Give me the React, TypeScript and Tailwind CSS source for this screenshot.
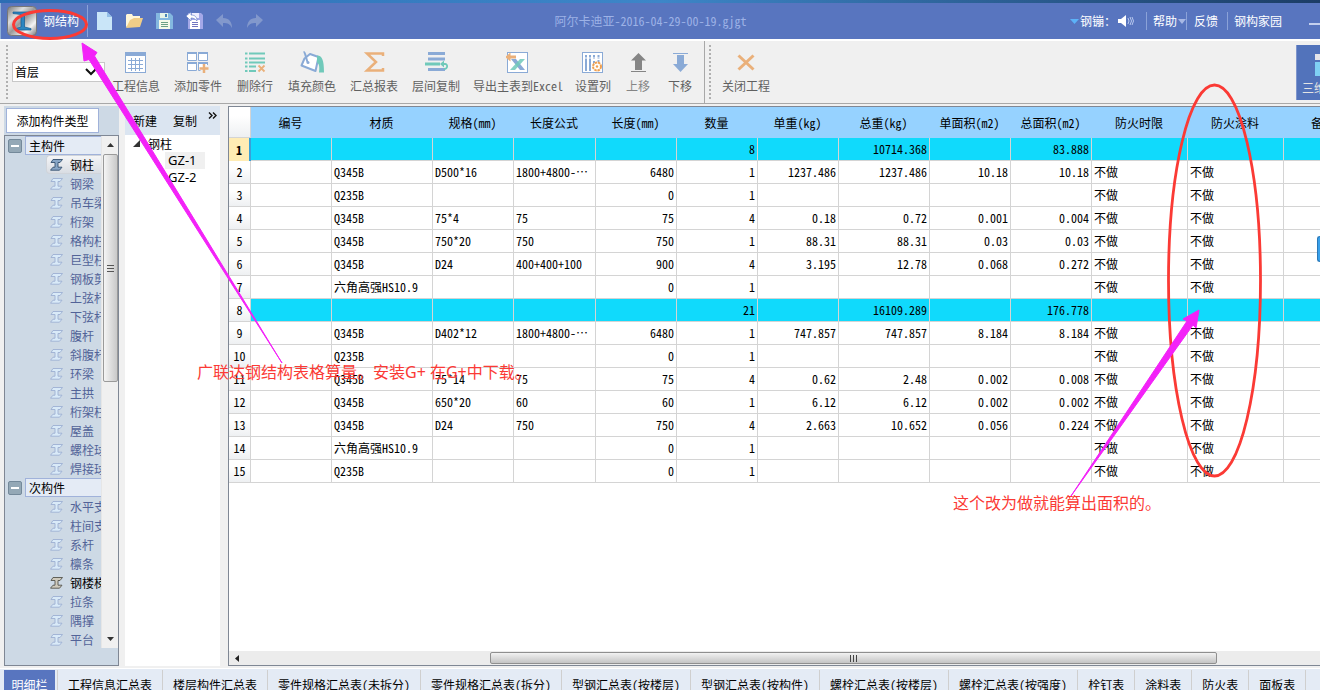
import type { ReactNode } from "react";

const columns = [
  { title: "编号", width: 81 },
  { title: "材质", width: 101 },
  { title: "规格(mm)", width: 81 },
  { title: "长度公式", width: 82 },
  { title: "长度(mm)", width: 81, right: true },
  { title: "数量", width: 81, right: true },
  { title: "单重(kg)", width: 81, right: true },
  { title: "总重(kg)", width: 91, right: true },
  { title: "单面积(m2)", width: 81, right: true },
  { title: "总面积(m2)", width: 81, right: true },
  { title: "防火时限", width: 96 },
  { title: "防火涂料", width: 96 },
  { title: "备注", width: 80 },
];

const no = "不做";
const rows: string[][] = [
  ["", "", "", "", "", "8", "", "10714.368", "", "83.888", "", "", ""],
  ["", "Q345B", "D500*16", "1800+4800-…", "6480", "1", "1237.486", "1237.486", "10.18", "10.18", no, no, ""],
  ["", "Q235B", "", "", "0", "1", "", "", "", "", no, no, ""],
  ["", "Q345B", "75*4", "75", "75", "4", "0.18", "0.72", "0.001", "0.004", no, no, ""],
  ["", "Q345B", "750*20", "750", "750", "1", "88.31", "88.31", "0.03", "0.03", no, no, ""],
  ["", "Q345B", "D24", "400+400+100", "900", "4", "3.195", "12.78", "0.068", "0.272", no, no, ""],
  ["", "六角高强HS10.9", "", "", "0", "1", "", "", "", "", no, no, ""],
  ["", "", "", "", "", "21", "", "16109.289", "", "176.778", "", "", ""],
  ["", "Q345B", "D402*12", "1800+4800-…", "6480", "1", "747.857", "747.857", "8.184", "8.184", no, no, ""],
  ["", "Q235B", "", "", "0", "1", "", "", "", "", no, no, ""],
  ["", "Q345B", "75*14", "75", "75", "4", "0.62", "2.48", "0.002", "0.008", no, no, ""],
  ["", "Q345B", "650*20", "60", "60", "1", "6.12", "6.12", "0.002", "0.002", no, no, ""],
  ["", "Q345B", "D24", "750", "750", "4", "2.663", "10.652", "0.056", "0.224", no, no, ""],
  ["", "六角高强HS10.9", "", "", "0", "1", "", "", "", "", no, no, ""],
  ["", "Q235B", "", "", "0", "1", "", "", "", "", no, no, ""],
];

const mainParts = ["钢柱", "钢梁", "吊车梁", "桁架", "格构柱", "巨型柱", "钢板剪力墙", "上弦杆", "下弦杆", "腹杆", "斜腹杆", "环梁", "主拱", "桁架柱", "屋盖", "螺栓球", "焊接球"];
const subParts = ["水平支撑", "柱间支撑", "系杆", "檩条", "钢楼梯", "拉条", "隅撑", "平台"];

const tabs = ["工程信息汇总表", "楼层构件汇总表", "零件规格汇总表(未拆分)", "零件规格汇总表(拆分)", "型钢汇总表(按楼层)", "型钢汇总表(按构件)", "螺栓汇总表(按楼层)", "螺栓汇总表(按强度)", "栓钉表", "涂料表", "防火表", "面板表"];

function Icon({ children }: { children: ReactNode }) {
  return (
    <svg viewBox="0 0 24 24" className="h-6 w-6" fill="none" aria-hidden="true">
      {children}
    </svg>
  );
}

const toolbarItems: { label: string; icon: ReactNode; size: string; dim?: boolean }[] = [
  {
    label: "工程信息",
    size: "px-[7px]",
    icon: (
      <Icon>
        <rect x="1.500" y="1.500" width="20" height="20" fill="#fff" stroke="#8aaad6" />
        <rect x="1" y="1" width="21" height="4" fill="#8aaad6" />
        <path d="M7.500 7v13M11.500 7v13M15.500 7v13M4 9.500h15M4 13.500h15M4 17.500h15" stroke="#8aaad6" />
      </Icon>
    ),
  },
  {
    label: "添加零件",
    size: "px-[7px]",
    icon: (
      <Icon>
        <path d="M1.500 1.500h9v8h-9zM12.500 1.500h9v8h-9zM1.500 11.500h9v8h-9zM21.500 14v-2.500h-9v8h2" fill="#fff" stroke="#8aaad6" />
        <path d="M1 2h10M12 2h10M1 12h10M12 12h10" stroke="#8aaad6" strokeWidth="2" />
        <path d="M18 13v9M13.500 17.500h9" stroke="#eab07a" strokeWidth="2.500" />
      </Icon>
    ),
  },
  {
    label: "删除行",
    size: "w-[52px]",
    icon: (
      <Icon>
        <path d="M2 2.500h2.500M6 2.500h16M2 7.500h2.500M6 7.500h16M2 11.500h2.500M6 11.500h16M2 15.500h2.500M6 15.500h7M2 20h2.500M6 20h7" stroke="#70c9ba" strokeWidth="2.200" />
        <path d="m15.500 14.500 6 6M21.500 14.500l-6 6" stroke="#eab07a" strokeWidth="1.800" />
      </Icon>
    ),
  },
  {
    label: "填充颜色",
    size: "px-[7px]",
    icon: (
      <Icon>
        <path d="M10 3 18.500 6l-3 14L1.500 14.500l3-7z" fill="#fff" stroke="#8aaad6" strokeWidth="2" strokeLinejoin="round" />
        <path d="M3.500 1c2 0 2 5 4 10" stroke="#8aaad6" strokeWidth="2" />
        <circle cx="8" cy="11.500" r="1.500" fill="#8aaad6" />
        <path d="M17 4.500c5 0 7 4 7 17h-5c1-7-.5-9-2-10z" fill="#70c9ba" />
      </Icon>
    ),
  },
  {
    label: "汇总报表",
    size: "px-[7px]",
    icon: (
      <Icon>
        <path d="M21 5V2.500H5l9 8.500-9 8.500h16V17" stroke="#eab07a" strokeWidth="2.500" />
      </Icon>
    ),
  },
  {
    label: "层间复制",
    size: "px-[7px]",
    icon: (
      <Icon>
        <path d="M4 2.500h17M4 8h17M4 18.500h17" stroke="#8aaad6" strokeWidth="3" />
        <path d="M0 13.500h24" stroke="#f0f0f0" strokeWidth="4" />
        <path d="M1 13h15" stroke="#70c9ba" strokeWidth="3" />
        <path d="M18 13h3c3 0 3 5-1 5" stroke="#70c9ba" strokeWidth="1.800" />
        <path d="M20 9.500v7L16 13z" fill="#70c9ba" />
      </Icon>
    ),
  },
  {
    label: "导出主表到Excel",
    size: "px-1.5",
    icon: (
      <Icon>
        <rect x="1.500" y="1.500" width="20" height="20" fill="#fff" stroke="#8aaad6" />
        <path d="M5 8h5l9 11h-5z" fill="#8aaad6" />
        <path d="M14 8h5L9 19H4z" fill="#70c9ba" opacity=".85" />
        <path d="M-1 6 4.500 1.500v3H10v3H4.500v3z" fill="#eab07a" />
      </Icon>
    ),
  },
  {
    label: "设置列",
    size: "w-12",
    icon: (
      <Icon>
        <rect x="1.500" y="1.500" width="20" height="20" fill="#fff" stroke="#8aaad6" />
        <path d="M5 4v16M9 4v16M13 4v4M17.500 4v4M13 10v3M17.500 9v2" stroke="#8aaad6" strokeWidth="2" />
        <path d="M3 7h17" stroke="#fff" />
        <circle cx="16" cy="15.500" r="4" fill="#fff" stroke="#f0a050" strokeWidth="2" strokeDasharray="2.500 .7" />
        <circle cx="16" cy="15.500" r="1.200" fill="#f0a050" />
      </Icon>
    ),
  },
  {
    label: "上移",
    size: "w-[42px]",
    dim: true,
    icon: (
      <Icon>
        <path d="m12.500 2 7.500 7.500h-4V19H9V9.500H5z" fill="#858585" />
        <path d="M5 20.500h15" stroke="#858585" />
      </Icon>
    ),
  },
  {
    label: "下移",
    size: "w-[42px]",
    icon: (
      <Icon>
        <path d="M5 2.500h15" stroke="#8aaad6" />
        <path d="M12.500 21 5 13h4V4h7v9h4z" fill="#8aaad6" />
      </Icon>
    ),
  },
];

function BeamIcon({ tone }: { tone: "soft" | "active" | "dark" }) {
  const c = { soft: ["#d9eaf8", "#9db0d2"], active: ["#88a6c6", "#34506f"], dark: ["#cfcabc", "#55534c"] }[tone];
  return (
    <svg viewBox="0 0 13 12" className="h-3 w-[13px] shrink-0" aria-hidden="true">
      <path d="M3 .5h9.500L10 3.500H8v4.700h4L9.500 11.200H.5L3 8.200h2V3.500H1z" fill={c[0]} stroke={c[1]} strokeWidth=".9" />
    </svg>
  );
}

function TreeGroup({ title, parts }: { title: string; parts: string[] }) {
  return (
    <section>
      <h2 className="flex h-[19px] items-center gap-[3px] pl-[3px]">
        <button type="button" aria-label={"折叠" + title} className="flex h-3.5 w-3.5 items-center justify-center rounded-[2px] border border-[#74899a] bg-[#94a8b6]">
          <span className="h-0.5 w-2 bg-white" />
        </button>
        <span className="flex h-[19px] flex-1 items-center border border-r-0 border-[#a0b2da] bg-[#e4ebf5] pl-[3px] text-black">{title}</span>
      </h2>
      <ul>
        {parts.map((p) => {
          const active = p === "钢柱";
          const dark = p === "钢楼梯";
          return (
            <li key={p} className="pl-[41px]">
              <button
                type="button"
                className={
                  "flex h-[19px] w-full items-center gap-[7px] pl-1 whitespace-nowrap " +
                  (active ? "rounded-l-sm border border-r-0 border-[#d0d4da] bg-linear-to-b from-[#f4f5f7] to-[#d9dde3] pl-[3px] text-black" : dark ? "text-black" : "text-[#526398]")
                }
              >
                <BeamIcon tone={active ? "active" : dark ? "dark" : "soft"} />
                {p}
              </button>
            </li>
          );
        })}
      </ul>
    </section>
  );
}

function Grip() {
  return <div className="w-0.5 self-stretch border-l-2 border-dotted border-[#b0b0b0]" />;
}

function TitleBar() {
  return (
    <header className="grid h-9 shrink-0 grid-cols-[1fr_auto_1fr] items-center border-l border-[#8fb0d8] bg-[#5875bf] text-white">
      <div className="flex items-center pl-1.5">
        <svg viewBox="0 0 30 30" className="h-[30px] w-[30px]" aria-hidden="true">
          <defs>
            <linearGradient id="steel" x1="0" y1="0" x2="1" y2="1">
              <stop offset="0" stopColor="#777" />
              <stop offset=".3" stopColor="#ddd" />
              <stop offset=".5" stopColor="#999" />
              <stop offset=".75" stopColor="#f4f4f4" />
              <stop offset="1" stopColor="#777" />
            </linearGradient>
          </defs>
          <rect x=".5" y=".5" width="29" height="29" rx="4" fill="url(#steel)" stroke="#777" />
          <path d="M6 6h19v1.500l-7.500 1V21l6.500 1.500V24H9v-1.500l5-1.500V8.500L6 7.500z" fill="#2c86c0" stroke="#155a90" strokeWidth=".7" />
        </svg>
        <h1 className="ml-1.5">钢结构</h1>
        <div className="ml-2 h-8 w-px bg-[#8ba2d8]" />
        <div className="ml-2 flex items-center gap-[13px]">
          <button type="button" aria-label="新建文件">
            <svg viewBox="0 0 17 18" className="h-[18px] w-[17px]"><path d="M1 0h10l5 5v13H1z" fill="#c9e5f8" /><path d="M11 0v5h5z" fill="#93bfe8" /></svg>
          </button>
          <button type="button" aria-label="打开">
            <svg viewBox="0 0 17 18" className="h-[18px] w-[17px]"><path d="M0 15V3l1-1h5l1 2h7v4" fill="#fff6d8" /><path d="M0 16 4 8l4-2h9l-3 9z" fill="#f0cd88" /></svg>
          </button>
          <button type="button" aria-label="保存">
            <svg viewBox="0 0 17 18" className="h-[18px] w-[17px]"><path d="M0 1h14l3 3v13H0z" fill="#84b8e0" /><path d="M4 1h8v5H4z" fill="#e6f4e8" /><path d="M9 2h2v3H9z" fill="#4b85b8" /><path d="M3 8h11v9H3z" fill="#f4f9e8" /><path d="M5 10.500h7M5 12.500h7M5 14.500h7" stroke="#6aa085" /></svg>
          </button>
          <button type="button" aria-label="另存为">
            <svg viewBox="0 0 17 18" className="h-[18px] w-[17px]"><path d="M2 1h13l2 2v14H2z" fill="#a4a8e8" /><path d="M6 1h7v5H6z" fill="#eef" /><path d="M4 8h10v9H4z" fill="#fff" /><path d="M6 10.500h6M6 12.500h6M6 14.500h6" stroke="#7075c0" /><path d="m0 4 5-4v3c4 0 6 2 6 6-2-2-3-3-6-3v3z" fill="#fff" stroke="#5875bf" strokeWidth=".6" /></svg>
          </button>
          <button type="button" aria-label="撤销">
            <svg viewBox="0 0 17 18" className="h-[18px] w-[17px]"><path d="m0 8 7-6v4c6 0 9 4 9 10-2-4-4-5-9-5v4z" fill="#8298cc" /></svg>
          </button>
          <button type="button" aria-label="重做">
            <svg viewBox="0 0 17 18" className="h-[18px] w-[17px]"><path d="m17 8-7-6v4c-6 0-9 4-9 10 2-4 4-5 9-5v4z" fill="#8298cc" /></svg>
          </button>
        </div>
      </div>
      <p className="pr-5 text-[#9db2e6]">阿尔卡迪亚-2016-04-29-00-19.gjgt</p>
      <div className="flex items-center justify-end whitespace-nowrap">
        <svg viewBox="0 0 9 5" className="mr-px h-[5px] w-[9px]" aria-hidden="true"><path d="M0 0h9L4.500 5z" fill="#5cb2f8" /></svg>
        <span>钢镚：</span>
        <button type="button" aria-label="声音" className="ml-0.5">
          <svg viewBox="0 0 16 12" className="h-3 w-4"><path d="M0 4h3l5-4v12L3 8H0z" fill="#fff" /><path d="M10 3q2 3 0 6M12 2q3 4 0 8M14 2q3 4 0 8" stroke="#b8c8ee" fill="none" /></svg>
        </button>
        <div className="ml-3 h-[18px] w-px bg-[#8ba2d8]" />
        <button type="button" className="ml-1.5 flex items-center gap-px">
          帮助
          <svg viewBox="0 0 8 5" className="h-[5px] w-2" aria-hidden="true"><path d="M0 0h8L4 5z" fill="#a8b8e4" /></svg>
        </button>
        <div className="h-[18px] w-px bg-[#8ba2d8]" />
        <button type="button" className="mx-[7px]">反馈</button>
        <div className="ml-0.5 h-[18px] w-px bg-[#8ba2d8]" />
        <button type="button" className="ml-1.5">钢构家园</button>
        <button type="button" aria-label="最小化" className="ml-[27px] h-2 w-[11px] border-b-2 border-[#c4d0ee]" />
      </div>
    </header>
  );
}

function Toolbar() {
  return (
    <div className="flex h-[65px] shrink-0 border-t-2 border-b border-t-white border-b-[#a8a8a8] text-[#606060]">
      <div className="flex py-1 pl-1.5"><Grip /></div>
      <div className="relative ml-1 flex w-[93px] items-center">
        <select aria-label="楼层" defaultValue="首层" className="h-5 w-full appearance-none border border-[#c8c8c8] bg-white pl-0.5 text-black">
          <option>首层</option>
          <option>第2层</option>
        </select>
        <svg viewBox="0 0 12 8" className="pointer-events-none absolute right-2 h-2 w-3" aria-hidden="true"><path d="m1 1 5 5 5-5" fill="none" stroke="#111" strokeWidth="2" /></svg>
      </div>
      {toolbarItems.map((t) => (
        <button key={t.label} type="button" className={"flex shrink-0 flex-col items-center pt-2.5 whitespace-nowrap " + t.size + (t.dim ? " text-[#858585]" : "")}>
          {t.icon}
          <span className="mt-px leading-5">{t.label}</span>
        </button>
      ))}
      <div className="ml-[3px] w-px bg-[#a8a8a8]" />
      <div className="flex py-1 pl-1"><Grip /></div>
      <button type="button" className="ml-[7px] flex flex-col items-center px-1 pt-2.5">
        <Icon><path d="m4.500 4.500 15 14M19.500 4.500l-15 14" stroke="#eab07a" strokeWidth="3" /></Icon>
        <span className="mt-px leading-5">关闭工程</span>
      </button>
      <button type="button" className="mt-1 ml-auto flex h-[55px] w-6 flex-col overflow-hidden border-l border-[#7e95cd] bg-[#5273bb] pl-[5px] whitespace-nowrap text-[#e4e4e4]">
        <svg viewBox="0 0 40 26" className="mt-[9px] ml-[13px] h-[26px] w-10 shrink-0" aria-hidden="true"><path d="M0 0h30v6H0z" fill="#e4e4ea" /><path d="M0 8h30v14H0z" fill="#7fd0f4" /></svg>
        <span className="leading-4">三维</span>
      </button>
    </div>
  );
}

function TypePanel() {
  return (
    <aside className="flex w-[115px] shrink-0 flex-col bg-[#cdd9e5]">
      <div className="h-[29px] pt-0.5 pl-0.5">
        <button type="button" className="h-[25px] w-[93px] border border-[#a0b2da] bg-white text-black">添加构件类型</button>
      </div>
      <div className="flex flex-1 items-start border border-[#7f8794]">
        <div className="w-24 overflow-hidden">
          <TreeGroup title="主构件" parts={mainParts} />
          <TreeGroup title="次构件" parts={subParts} />
        </div>
        <div className="flex h-[512px] flex-1 flex-col items-center border-l border-[#e6e6e6] bg-[#f0f0f0]">
          <svg viewBox="0 0 7 4" className="my-[7px] h-1 w-[7px]" aria-hidden="true"><path d="M0 4h7L3.500 0z" fill="#333" /></svg>
          <div className="flex h-[228px] w-[15px] flex-col items-center justify-center gap-0.5 rounded-[2px] border border-[#9a9a9a] bg-linear-to-r from-[#f5f5f5] to-[#c9c9c9]">
            <span className="h-px w-[7px] bg-[#555]" />
            <span className="h-px w-[7px] bg-[#555]" />
            <span className="h-px w-[7px] bg-[#555]" />
          </div>
          <svg viewBox="0 0 7 4" className="mt-auto mb-[7px] h-1 w-[7px]" aria-hidden="true"><path d="M0 0h7L3.500 4z" fill="#333" /></svg>
        </div>
      </div>
    </aside>
  );
}

function MemberPanel() {
  return (
    <aside className="w-[95px] shrink-0 bg-white text-black">
      <div className="flex h-[29px] items-center bg-[#dbe5f1] pl-2">
        <button type="button">新建</button>
        <button type="button" className="ml-4">复制</button>
        <button type="button" aria-label="更多" className="ml-[11px] self-start">
          <svg viewBox="0 0 9 7" className="mt-1.5 h-[7px] w-[9px]"><path d="m1 .5 3 3-3 3M5 .5l3 3-3 3" fill="none" stroke="#111" strokeWidth="1.400" /></svg>
        </button>
      </div>
      <div className="flex h-[17px] items-center gap-2 pl-2">
        <svg viewBox="0 0 7 7" className="h-[7px] w-[7px]" aria-hidden="true"><path d="M7 0v7H0z" fill="#333" /></svg>
        钢柱
      </div>
      <ul className="pl-10 font-['Noto_Sans','Noto_Sans_CJK_SC',sans-serif] text-[13px] leading-[17px]">
        <li className="w-10 bg-[#f0f0f0] pl-[3px]">GZ-1</li>
        <li className="w-10 pl-[3px]">GZ-2</li>
      </ul>
    </aside>
  );
}

function Sheet() {
  return (
    <main className="flex min-w-0 flex-1 flex-col overflow-hidden border border-r-0 border-[#7f8794] bg-white">
      <div className="flex-1">
        <table className="w-[1135px] table-fixed border-separate border-spacing-0 text-black">
          <colgroup>
            <col className="w-[22px]" />
            {columns.map((c) => (
              <col key={c.title} style={{ width: c.width }} />
            ))}
          </colgroup>
          <thead>
            <tr className="h-[31px] bg-[#96d2ff]">
              <th aria-label="行号" className="border-r border-b border-[#d4d4d4] bg-linear-to-b from-white from-30% to-[#eef0f2] p-0" />
              {columns.map((c) => (
                <th key={c.title} scope="col" className="p-0 pr-0.5 font-normal whitespace-nowrap">{c.title}</th>
              ))}
            </tr>
          </thead>
          <tbody>
            {rows.map((r, i) => {
              const total = i === 0 || i === 7;
              return (
                <tr key={i} className={"h-[23px] " + (total ? "bg-[#10dafc]" : "")}>
                  <th
                    scope="row"
                    className={
                      "p-0 text-center " +
                      (i === 0 ? "border-r-2 border-[#3aa0d8] bg-[#ffecb4] font-bold" : "border-r border-b border-[#d4d4d4] bg-linear-to-b from-white from-30% to-[#eef0f2] font-normal")
                    }
                  >
                    {i + 1}
                  </th>
                  {r.map((v, j) => (
                    <td
                      key={j}
                      className={"overflow-hidden border-r border-b border-[#d4d4d4] p-0 px-0.5 leading-[22px] whitespace-nowrap " + (columns[j].right ? "text-right" : "text-left")}
                    >
                      {v}
                    </td>
                  ))}
                </tr>
              );
            })}
          </tbody>
        </table>
      </div>
      <div className="flex h-3.5 shrink-0 items-center bg-[#ececec]">
        <svg viewBox="0 0 4 7" className="ml-1.5 h-[7px] w-1 shrink-0" aria-hidden="true"><path d="M4 0v7L0 3.500z" fill="#222" /></svg>
        <div className="ml-[251px] flex h-3 w-[727px] items-center justify-center gap-0.5 rounded-[2px] border border-[#8f8f8f] bg-linear-to-b from-[#f2f2f2] to-[#c4c4c4]">
          <span className="h-[7px] w-px bg-[#444]" />
          <span className="h-[7px] w-px bg-[#444]" />
          <span className="h-[7px] w-px bg-[#444]" />
        </div>
      </div>
    </main>
  );
}

function Annotations() {
  return (
    <div className="pointer-events-none absolute inset-0 text-base leading-6 text-[#fb3a35]">
      <p className="absolute top-[360px] left-[197px] font-['Noto_Sans','Noto_Sans_CJK_SC',sans-serif] whitespace-nowrap">广联达钢结构表格算量。安装G+ 在G+中下载。</p>
      <p className="absolute top-[491px] left-[953px] font-['Noto_Sans','Noto_Sans_CJK_SC',sans-serif] whitespace-nowrap">这个改为做就能算出面积的。</p>
      <svg viewBox="0 0 1320 690" className="absolute top-0 left-0 h-[690px] w-[1320px]" aria-hidden="true">
        <ellipse cx="50" cy="24.500" rx="36.500" ry="14" fill="none" stroke="#fb3a35" strokeWidth="3" />
        <ellipse cx="1214.500" cy="280.500" rx="46" ry="195.500" fill="none" stroke="#fb3a35" strokeWidth="2.800" />
        <path d="M82 43 97 52.500 94.500 56 282 363 89 59.500 84 61z" fill="#f322f8" stroke="#f322f8" />
        <path d="M1199 310 1183 319 1187 321 1071 496 1193 325 1196 328z" fill="#f322f8" stroke="#f322f8" />
      </svg>
    </div>
  );
}

export default function App() {
  return (
    <div className="relative flex h-screen flex-col overflow-hidden bg-[#f0f0f0] font-['Noto_Sans_Mono_CJK_SC','Noto_Sans_CJK_SC',sans-serif] text-xs">
      <div className="h-[3px] shrink-0 bg-linear-to-r from-[#2c6db4] via-[#3d86c8] to-[#1c3d66]" />
      <TitleBar />
      <Toolbar />
      <div className="flex min-h-0 flex-1 py-0.5 pl-1">
        <TypePanel />
        <div className="w-1.5 shrink-0" />
        <MemberPanel />
        <div className="w-2 shrink-0" />
        <Sheet />
      </div>
      <nav className="flex h-[22px] shrink-0 overflow-hidden border-t border-white bg-[#e4ebf5] pt-px pl-1 text-black">
        <button type="button" className="mr-0.5 h-[30px] w-[51px] shrink-0 bg-[#5875bf] text-white">明细栏</button>
        <div className="flex border-l border-[#cfcfcf]">
          {tabs.map((t) => (
            <button key={t} type="button" className="h-[30px] shrink-0 border-r border-[#cfcfcf] px-2.5 whitespace-nowrap">{t}</button>
          ))}
        </div>
      </nav>
      <div className="absolute top-[236px] right-0 h-[26px] w-[3px] rounded-l border border-r-0 border-[#2a78b8] bg-[#38a0ea]" />
      <Annotations />
    </div>
  );
}
